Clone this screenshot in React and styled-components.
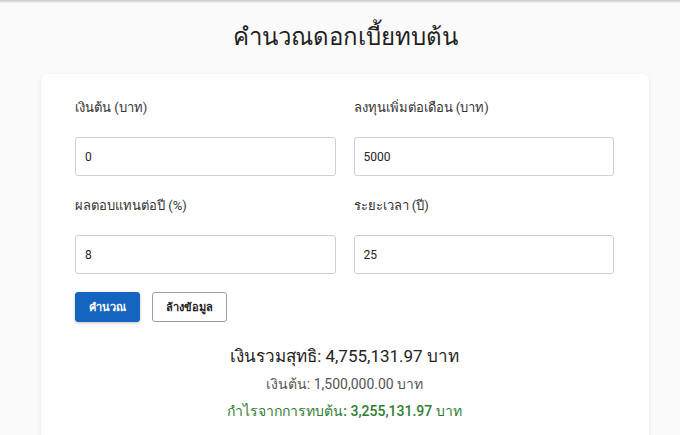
import React, { useState } from 'react';
import styled, { createGlobalStyle } from 'styled-components';

const GlobalStyle = createGlobalStyle`
  html, body {
    margin: 0;
    padding: 0;
    background: #fafafa;
    font-family: Roboto, "Noto Sans", "DejaVu Sans", sans-serif;
    color: #222;
  }
`;

const fmt = (n) =>
  n.toLocaleString('en-US', { minimumFractionDigits: 2, maximumFractionDigits: 2 });

// monthly deposit at the end of each month
function compute(principal, monthly, rate, years) {
  const r = rate / 100 / 12;
  const n = years * 12;
  let total = principal;
  for (let i = 0; i < n; i++) {
    total = total * (1 + r) + monthly;
  }
  const invested = principal + monthly * n;
  return { total, invested, profit: total - invested };
}

export default function App() {
  const [principal, setPrincipal] = useState('0');
  const [monthly, setMonthly] = useState('5000');
  const [rate, setRate] = useState('8');
  const [years, setYears] = useState('25');
  const [result, setResult] = useState({
    total: 4755131.97,
    invested: 1500000,
    profit: 3255131.97,
  });

  const calc = () =>
    setResult(compute(+principal || 0, +monthly || 0, +rate || 0, +years || 0));
  const clear = () => {
    setPrincipal('');
    setMonthly('');
    setRate('');
    setYears('');
    setResult(null);
  };

  return (
    <Page>
      <GlobalStyle />
      <TopShadow />
      <Title>คำนวณดอกเบี้ยทบต้น</Title>
      <Card>
        <Grid>
          <Field>
            <Label>เงินต้น (บาท)</Label>
            <Input value={principal} onChange={(e) => setPrincipal(e.target.value)} />
          </Field>
          <Field>
            <Label>ลงทุนเพิ่มต่อเดือน (บาท)</Label>
            <Input value={monthly} onChange={(e) => setMonthly(e.target.value)} />
          </Field>
          <Field>
            <Label>ผลตอบแทนต่อปี (%)</Label>
            <Input value={rate} onChange={(e) => setRate(e.target.value)} />
          </Field>
          <Field>
            <Label>ระยะเวลา (ปี)</Label>
            <Input value={years} onChange={(e) => setYears(e.target.value)} />
          </Field>
        </Grid>
        <Actions>
          <Button $primary onClick={calc}>คำนวณ</Button>
          <Button onClick={clear}>ล้างข้อมูล</Button>
        </Actions>
        {result && (
          <Results>
            <Total>เงินรวมสุทธิ: {fmt(result.total)} บาท</Total>
            <Line>เงินต้น: {fmt(result.invested)} บาท</Line>
            <Line $profit>กำไรจากการทบต้น: {fmt(result.profit)} บาท</Line>
          </Results>
        )}
      </Card>
    </Page>
  );
}

const Page = styled.div`
  min-height: 435px;
  padding: 0 31px 0 41px;
`;

const TopShadow = styled.div`
  height: 3px;
  margin: 0 -31px 0 -41px;
  background: linear-gradient(#c8c8c8, #f4f4f4);
`;

const Title = styled.h1`
  margin: 0;
  padding: 14px 0 17px;
  text-align: center;
  font-size: 24px;
  font-weight: 400;
  line-height: 40px;
  color: #1f1f1f;
`;

const Card = styled.div`
  background: #fff;
  border-radius: 6px;
  box-shadow: 0 1px 4px rgba(0, 0, 0, 0.08);
  padding: 24px 35px 20px 34px;
`;

const Grid = styled.div`
  display: grid;
  grid-template-columns: 1fr 1fr;
  column-gap: 18px;
  row-gap: 20px;
`;

const Field = styled.div`
  display: flex;
  flex-direction: column;
`;

const Label = styled.label`
  font-size: 13px;
  line-height: 20px;
  color: #333;
  margin-bottom: 19px;
`;

const Input = styled.input`
  box-sizing: border-box;
  height: 39px;
  width: 100%;
  padding: 0 9px;
  border: 1px solid #d0d0d0;
  border-radius: 3px;
  font-family: Roboto, "Noto Sans", sans-serif;
  font-size: 12px;
  color: #222;
  outline: none;
`;

const Actions = styled.div`
  display: flex;
  gap: 12px;
  margin-top: 18px;
`;

const Button = styled.button`
  box-sizing: border-box;
  height: 30px;
  padding: 0 13px;
  border-radius: 3px;
  font-family: Roboto, "Noto Sans", sans-serif;
  font-size: 11px;
  font-weight: 700;
  cursor: pointer;
  border: 1px solid ${(p) => (p.$primary ? '#1565c0' : '#9e9e9e')};
  background: ${(p) => (p.$primary ? '#1565c0' : '#fff')};
  color: ${(p) => (p.$primary ? '#fff' : '#222')};
  box-shadow: ${(p) => (p.$primary ? '0 1px 3px rgba(0,0,0,0.25)' : 'none')};
`;

const Results = styled.div`
  display: flex;
  flex-direction: column;
  align-items: center;
  margin-top: 22px;
`;

const Total = styled.div`
  font-size: 17px;
  line-height: 24px;
  color: #222;
`;

const Line = styled.div`
  font-size: 14px;
  line-height: 22px;
  margin-top: 5px;
  font-weight: ${(p) => (p.$profit ? 500 : 400)};
  color: ${(p) => (p.$profit ? '#2e7d32' : '#555')};
`;
